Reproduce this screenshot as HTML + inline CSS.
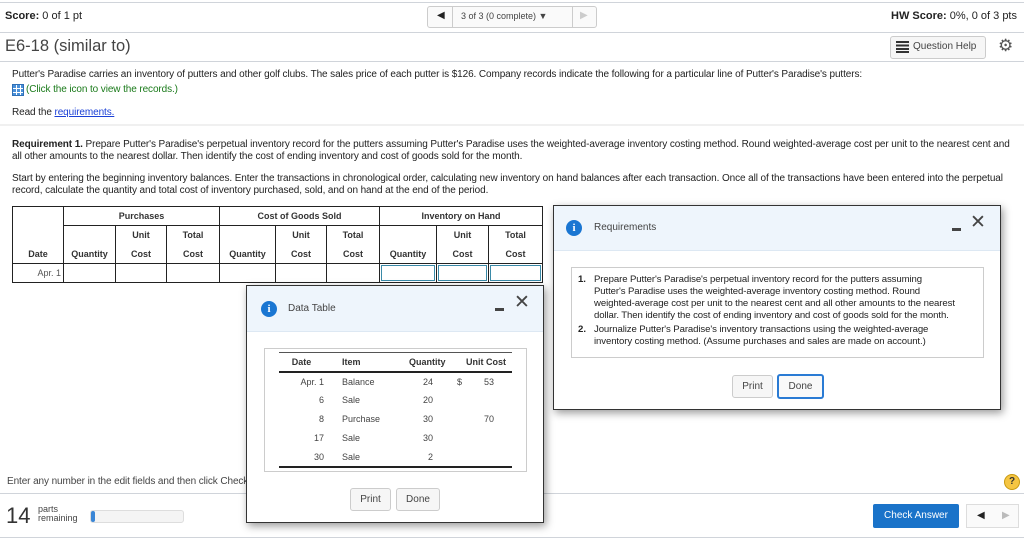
<!DOCTYPE html>
<html><head><meta charset="utf-8"><style>
*{margin:0;padding:0;box-sizing:border-box}
body{width:1024px;height:539px;position:relative;overflow:hidden;background:#fff;font-family:"Liberation Sans",Arial,sans-serif;color:#222}
.a{position:absolute;white-space:nowrap}
.hl{position:absolute;left:0;width:1024px;height:1px;background:#d0d4da}
.s9{font-size:10px;letter-spacing:-0.1px}
table.m{position:absolute;left:12px;top:206px;border-collapse:collapse;font-size:9px;font-weight:bold;color:#333}
table.m td{border:1px solid #222;text-align:center;padding:0;height:19px}
.btn{position:absolute;border:1px solid #ccc;background:#f6f6f6;border-radius:3px;font-size:10px;color:#444;text-align:center}
.dlg{position:absolute;background:#fff;border:1px solid #333;box-shadow:2px 3px 8px rgba(0,0,0,.4)}
.dh{position:absolute;left:0;top:0;right:0;background:#eef5fc;border-bottom:1px solid #dde8f3}
.ic{position:absolute;width:16px;height:16px;border-radius:50%;background:#1a76d2;color:#fff;font:bold 11px "Liberation Serif",serif;text-align:center;line-height:16px}
.dt td{font-size:9px;color:#444;height:19px}
</style></head><body>
<div class="hl" style="top:2px"></div>
<div class="a" style="left:5px;top:10px;font-size:11px"><b>Score:</b> 0 of 1 pt</div>
<div class="a" style="left:427px;top:6px;width:170px;height:22px;border:1px solid #ccc;border-radius:3px;background:#fafafa"></div>
<div class="a" style="left:437px;top:10px;font-size:10px">&#9664;</div>
<div class="a" style="left:452px;top:6px;width:1px;height:22px;background:#ccc"></div>
<div class="a" style="left:461px;top:11px;font-size:9px;color:#444">3 of 3 (0 complete) &#9660;</div>
<div class="a" style="left:572px;top:6px;width:1px;height:22px;background:#ccc"></div>
<div class="a" style="left:580px;top:10px;font-size:10px;color:#ccc">&#9654;</div>
<div class="a" style="right:7px;top:10px;font-size:11px"><b>HW Score:</b> 0%, 0 of 3 pts</div>
<div class="hl" style="top:32px"></div>
<div class="a" style="left:5px;top:37px;font-size:16.5px;color:#444">E6-18 (similar to)</div>
<div class="a" style="left:890px;top:36px;width:96px;height:23px;border:1px solid #ccc;border-radius:3px;background:#f6f6f6"></div>
<div class="a" style="left:896px;top:41px;width:13px;height:12px;background:repeating-linear-gradient(#333 0 2px,#f6f6f6 2px 3.4px)"></div>
<div class="a" style="left:913px;top:41px;font-size:10px;color:#444">Question Help</div>
<div class="a" style="left:998px;top:36px;font-size:17px;color:#555">&#9881;</div>
<div class="hl" style="top:61px"></div>
<div class="a s9" style="left:12px;top:69px">Putter's Paradise carries an inventory of putters and other golf clubs. The sales price of each putter is $126. Company records indicate the following for a particular line of Putter's Paradise's putters:</div>
<div class="a" style="left:12px;top:84px;width:12px;height:12px;background:#4a90d9;border:1px solid #2f6fb5;background-image:linear-gradient(90deg,transparent 3px,#fff 3px 4px,transparent 4px 7px,#fff 7px 8px,transparent 8px),linear-gradient(transparent 3px,#fff 3px 4px,transparent 4px 7px,#fff 7px 8px,transparent 8px)"></div>
<div class="a s9" style="left:26px;top:84px;color:#1a7a1a">(Click the icon to view the records.)</div>
<div class="a s9" style="left:12px;top:107px">Read the <span style="color:#1a3fd6;text-decoration:underline">requirements.</span></div>
<div class="a" style="left:0;top:124px;width:1024px;height:2px;background:#f0f0f0"></div>
<div class="a s9" style="left:12px;top:139px;line-height:12px"><b>Requirement 1.</b> Prepare Putter's Paradise's perpetual inventory record for the putters assuming Putter's Paradise uses the weighted-average inventory costing method. Round weighted-average cost per unit to the nearest cent and<br>all other amounts to the nearest dollar. Then identify the cost of ending inventory and cost of goods sold for the month.</div>
<div class="a s9" style="left:12px;top:173px;line-height:12px">Start by entering the beginning inventory balances. Enter the transactions in chronological order, calculating new inventory on hand balances after each transaction. Once all of the transactions have been entered into the perpetual<br>record, calculate the quantity and total cost of inventory purchased, sold, and on hand at the end of the period.</div>
<table class="m">
<tr><td rowspan="3" style="width:51px;vertical-align:bottom;padding-bottom:4px">Date</td><td colspan="3">Purchases</td><td colspan="3">Cost of Goods Sold</td><td colspan="3">Inventory on Hand</td></tr>
<tr><td rowspan="2" style="width:52px;vertical-align:bottom;padding-bottom:4px">Quantity</td><td style="width:51px;border-bottom:0">Unit</td><td style="width:53px;border-bottom:0">Total</td><td rowspan="2" style="width:56px;vertical-align:bottom;padding-bottom:4px">Quantity</td><td style="width:51px;border-bottom:0;border-left-color:#aaa">Unit</td><td style="width:53px;border-bottom:0">Total</td><td rowspan="2" style="width:57px;vertical-align:bottom;padding-bottom:4px">Quantity</td><td style="width:52px;border-bottom:0;border-left-color:#ccc">Unit</td><td style="width:54px;border-bottom:0">Total</td></tr>
<tr><td style="border-top:0">Cost</td><td style="border-top:0">Cost</td><td style="border-top:0;border-left-color:#aaa">Cost</td><td style="border-top:0">Cost</td><td style="border-top:0;border-left-color:#ccc">Cost</td><td style="border-top:0">Cost</td></tr>
<tr><td style="text-align:right;font-weight:normal;color:#555;padding-right:2px">Apr. 1</td><td></td><td></td><td></td><td></td><td style="border-left-color:#aaa"></td><td></td><td style="padding:1px"><div style="border:1px solid #3a8aa8;height:16px"></div></td><td style="padding:1px;border-left-color:#ccc"><div style="border:1px solid #3a8aa8;height:16px"></div></td><td style="padding:1px"><div style="border:1px solid #3a8aa8;height:16px"></div></td></tr>
</table>
<!-- Requirements dialog -->
<div class="dlg" style="left:553px;top:205px;width:448px;height:205px">
<div class="dh" style="height:45px"></div>
<div class="ic" style="left:12px;top:14px">i</div>
<div class="a" style="left:40px;top:16px;font-size:10px;color:#444">Requirements</div>
<div class="a" style="left:398px;top:22px;width:9px;height:3px;background:#444"></div>
<div class="a" style="left:416px;top:5px;font-size:19px;color:#444">&#10005;</div>
<div class="a" style="left:17px;top:61px;width:413px;height:91px;border:1px solid #ccc"></div>
<div class="a" style="left:24px;top:68px;font-size:9.6px;line-height:12px;color:#222;letter-spacing:-0.1px"><b>1.</b></div>
<div class="a" style="left:40px;top:68px;font-size:9.6px;line-height:12px;color:#222;letter-spacing:-0.1px">Prepare Putter's Paradise's perpetual inventory record for the putters assuming<br>Putter's Paradise uses the weighted-average inventory costing method. Round<br>weighted-average cost per unit to the nearest cent and all other amounts to the nearest<br>dollar. Then identify the cost of ending inventory and cost of goods sold for the month.</div>
<div class="a" style="left:24px;top:118px;font-size:9.6px;line-height:12px;color:#222"><b>2.</b></div>
<div class="a" style="left:40px;top:118px;font-size:9.6px;line-height:12px;color:#222;letter-spacing:-0.1px">Journalize Putter's Paradise's inventory transactions using the weighted-average<br>inventory costing method. (Assume purchases and sales are made on account.)</div>
<div class="btn" style="left:178px;top:169px;width:41px;height:23px;line-height:21px">Print</div>
<div class="btn" style="left:223px;top:168px;width:47px;height:25px;line-height:21px;border:2px solid #2a7bd4;background:#f9f9f9">Done</div>
</div>
<!-- bottom -->
<div class="a s9" style="left:7px;top:476px;color:#444">Enter any number in the edit fields and then click Check Answer.</div>
<div class="a" style="left:1004px;top:474px;width:16px;height:16px;border-radius:50%;background:#f5c542;border:1px solid #c99a10;font:bold 10px sans-serif;text-align:center;line-height:14px;color:#333">?</div>
<div class="hl" style="top:493px"></div>
<div class="a" style="left:6px;top:503px;font-size:22px;color:#333">14</div>
<div class="a" style="left:38px;top:505px;font-size:9px;line-height:9px;color:#444">parts<br>remaining</div>
<div class="a" style="left:90px;top:510px;width:94px;height:13px;border:1px solid #ddd;border-radius:3px;background:#f4f4f4"></div>
<div class="a" style="left:91px;top:511px;width:4px;height:11px;background:#3a86d6;border-radius:2px"></div>
<div class="a" style="left:873px;top:504px;width:86px;height:24px;background:#1a73c9;border-radius:2px;color:#fff;font-size:10px;text-align:center;line-height:24px">Check Answer</div>
<div class="a" style="left:966px;top:504px;width:53px;height:24px;border:1px solid #ddd;background:#fafafa"></div>
<div class="a" style="left:977px;top:510px;font-size:10px">&#9664;</div>
<div class="a" style="left:1002px;top:510px;font-size:10px;color:#bbb">&#9654;</div>
<div class="hl" style="top:537px"></div>
<!-- Data table dialog -->
<div class="dlg" style="left:246px;top:285px;width:298px;height:238px">
<div class="dh" style="height:46px"></div>
<div class="ic" style="left:14px;top:15px">i</div>
<div class="a" style="left:41px;top:17px;font-size:10px;color:#444">Data Table</div>
<div class="a" style="left:248px;top:22px;width:9px;height:3px;background:#444"></div>
<div class="a" style="left:267px;top:5px;font-size:19px;color:#444">&#10005;</div>
<div class="a" style="left:17px;top:62px;width:263px;height:124px;border:1px solid #ccc"></div>
<table class="dt" style="position:absolute;left:32px;top:66px;width:233px;border-collapse:collapse;border-top:1px solid #555;border-bottom:2px solid #222;table-layout:fixed">
<tr style="border-bottom:2px solid #222"><td style="font-weight:bold;text-align:center;width:45px;color:#333">Date</td><td style="font-weight:bold;padding-left:18px;width:85px;color:#333">Item</td><td style="font-weight:bold;text-align:right;width:32px;color:#333;overflow:visible">Quantity</td><td colspan="2" style="font-weight:bold;text-align:right;color:#333;padding-right:6px">Unit Cost</td></tr>
<tr><td style="text-align:right">Apr. 1</td><td style="padding-left:18px">Balance</td><td style="text-align:right;padding-right:8px">24</td><td style="padding-left:16px;width:30px">$</td><td style="text-align:right;padding-right:18px">53</td></tr>
<tr><td style="text-align:right">6</td><td style="padding-left:18px">Sale</td><td style="text-align:right;padding-right:8px">20</td><td></td><td></td></tr>
<tr><td style="text-align:right">8</td><td style="padding-left:18px">Purchase</td><td style="text-align:right;padding-right:8px">30</td><td></td><td style="text-align:right;padding-right:18px">70</td></tr>
<tr><td style="text-align:right">17</td><td style="padding-left:18px">Sale</td><td style="text-align:right;padding-right:8px">30</td><td></td><td></td></tr>
<tr><td style="text-align:right">30</td><td style="padding-left:18px">Sale</td><td style="text-align:right;padding-right:8px">2</td><td></td><td></td></tr>
</table>
<div class="btn" style="left:103px;top:202px;width:41px;height:23px;line-height:21px">Print</div>
<div class="btn" style="left:149px;top:202px;width:44px;height:23px;line-height:21px">Done</div>
</div>
</body></html>
